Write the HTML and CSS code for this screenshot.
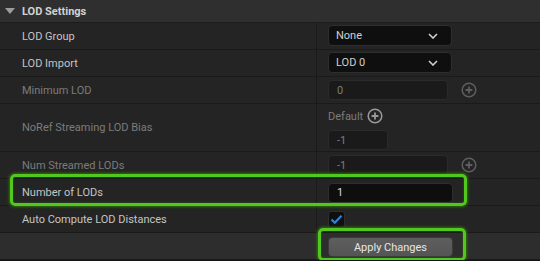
FILE: index.html
```html
<!DOCTYPE html>
<html>
<head>
<meta charset="utf-8">
<title>LOD Settings</title>
<link rel="stylesheet" href="styles.css">
</head>
<body>
<div class="panel">
  <div class="header">
    <span class="arrow"></span>
    <span class="title">LOD Settings</span>
  </div>

  <div class="row">
    <div class="name">LOD Group</div>
    <div class="value">
      <div class="combo"><span>None</span>
        <svg class="chev" width="10" height="6" viewBox="0 0 10 6"><polyline points="1,1 5,5 9,1" fill="none" stroke="#d0d0d0" stroke-width="1.6"/></svg>
      </div>
    </div>
  </div>

  <div class="row">
    <div class="name">LOD Import</div>
    <div class="value">
      <div class="combo"><span>LOD 0</span>
        <svg class="chev" width="10" height="6" viewBox="0 0 10 6"><polyline points="1,1 5,5 9,1" fill="none" stroke="#d0d0d0" stroke-width="1.6"/></svg>
      </div>
    </div>
  </div>

  <div class="row">
    <div class="name off">Minimum LOD</div>
    <div class="value">
      <div class="field off">0</div>
      <svg class="plus" width="16" height="16" viewBox="0 0 16 16"><circle cx="8" cy="8" r="6.8" fill="none" stroke="#5e5e5e" stroke-width="1.5"/><path d="M8 4.6v6.8M4.6 8h6.8" stroke="#5e5e5e" stroke-width="1.8"/></svg>
    </div>
  </div>

  <div class="row tall">
    <div class="name off">NoRef Streaming LOD Bias</div>
    <div class="value stack">
      <div class="def">Default
        <svg class="plus" width="16" height="16" viewBox="0 0 16 16"><circle cx="8" cy="8" r="6.8" fill="none" stroke="#9a9a9a" stroke-width="1.5"/><path d="M8 4.6v6.8M4.6 8h6.8" stroke="#9a9a9a" stroke-width="1.8"/></svg>
      </div>
      <div class="field off short">-1</div>
    </div>
  </div>

  <div class="row">
    <div class="name off">Num Streamed LODs</div>
    <div class="value">
      <div class="field off">-1</div>
      <svg class="plus" width="16" height="16" viewBox="0 0 16 16"><circle cx="8" cy="8" r="6.8" fill="none" stroke="#5e5e5e" stroke-width="1.5"/><path d="M8 4.6v6.8M4.6 8h6.8" stroke="#5e5e5e" stroke-width="1.8"/></svg>
    </div>
  </div>

  <div class="row">
    <div class="name">Number of LODs</div>
    <div class="value">
      <div class="field on">1</div>
    </div>
  </div>

  <div class="row">
    <div class="name">Auto Compute LOD Distances</div>
    <div class="value">
      <div class="check">
        <svg width="13" height="11" viewBox="0 0 13 11"><polyline points="1.5,5.5 4.8,8.8 11.5,1.8" fill="none" stroke="#1f86f0" stroke-width="2.2"/></svg>
      </div>
    </div>
  </div>

  <div class="row apply">
    <div class="value">
      <button class="btn">Apply Changes</button>
    </div>
  </div>

  <!-- highlight boxes drawn over the panel -->
  <div class="mark mark-lods"></div>
  <div class="mark mark-apply"></div>
</div>
</body>
</html>
```

FILE: styles.css
```css
* {box-sizing: border-box;}

body {
  margin: 0;
  background: #151515;
  font-family: Roboto, "Noto Sans", sans-serif;
  font-size: 11px;
  color: #c4c4c4;
}

.panel {
  position: relative;
  width: 540px;
}

.header {
  height: 23px;
  background: #2f2f2f;
  border-bottom: 1px solid #1c1c1c;
  display: flex;
  align-items: center;
  padding-left: 5px;
}

.arrow {
  width: 0;
  height: 0;
  border-left: 5px solid transparent;
  border-right: 5px solid transparent;
  border-top: 6px solid #9c9c9c;
  margin-right: 7px;
}

.title {
  font-weight: bold;
  color: #d2d2d2;
}

.row {
  display: flex;
  height: 27px;
  background: #242424;
  border-bottom: 1px solid #1a1a1a;
}

.row.tall {
  height: 48px;
}

.name {
  width: 317px;
  flex: none;
  padding-left: 22px;
  border-right: 1px solid #1a1a1a;
  display: flex;
  align-items: center;
}

.name.off {
  color: #7c7c7c;
}

.value {
  flex: 1;
  display: flex;
  align-items: center;
  padding-left: 11px;
}

.value.stack {
  flex-direction: column;
  align-items: flex-start;
  justify-content: flex-start;
  padding-top: 3px;
}

.combo {
  width: 124px;
  height: 21px;
  background: #0f0f0f;
  border: 1px solid #2e2e2e;
  border-radius: 4px;
  display: flex;
  align-items: center;
  justify-content: space-between;
  padding: 0 13px 0 7px;
  color: #cfcfcf;
  margin-top: -1px;
}

.field {
  width: 120px;
  height: 20px;
  border-radius: 4px;
  display: flex;
  align-items: center;
  padding-left: 8px;
}

.field.off {
  background: #1a1a1a;
  border: 1px solid #2a2a2a;
  color: #7c7c7c;
}

.field.on {
  width: 125px;
  background: #0e0e0e;
  border: 1px solid #2e2e2e;
  color: #dadada;
  margin-top: 1px;
}

.field.short {
  width: 60px;
  margin-top: 5px;
}

.plus {
  margin-left: 13px;
  flex: none;
}

.def {
  display: flex;
  align-items: center;
  height: 18px;
  color: #7c7c7c;
}

.def .plus {
  margin-left: 4px;
}

.check {
  width: 17px;
  height: 17px;
  background: #0f0f0f;
  border: 1px solid #2e2e2e;
  border-radius: 3px;
  display: flex;
  align-items: center;
  justify-content: center;
  margin-top: 1px;
}

.row.apply {
  background: #2d2d2d;
}

.row.apply .value {
  padding-left: 328px;
}

.btn {
  width: 125px;
  height: 20px;
  margin-top: 2px;
  background: linear-gradient(#5e5e5e, #555555);
  border: 1px solid #3a3a3a;
  border-radius: 4px;
  font-family: Roboto, "Noto Sans", sans-serif;
  font-size: 11px;
  color: #e6e6e6;
  padding: 0;
}

.mark {
  position: absolute;
  border: 3px solid #52c81e;
  border-radius: 5px;
  box-shadow: 0 0 3px 1px rgba(48, 130, 12, 0.85), inset 0 0 2px rgba(48, 130, 12, 0.8);
  pointer-events: none;
}

.mark-lods {
  left: 10px;
  top: 174px;
  width: 457px;
  height: 32px;
}

.mark-apply {
  left: 318px;
  top: 228px;
  width: 148px;
  height: 33px;
}
```
